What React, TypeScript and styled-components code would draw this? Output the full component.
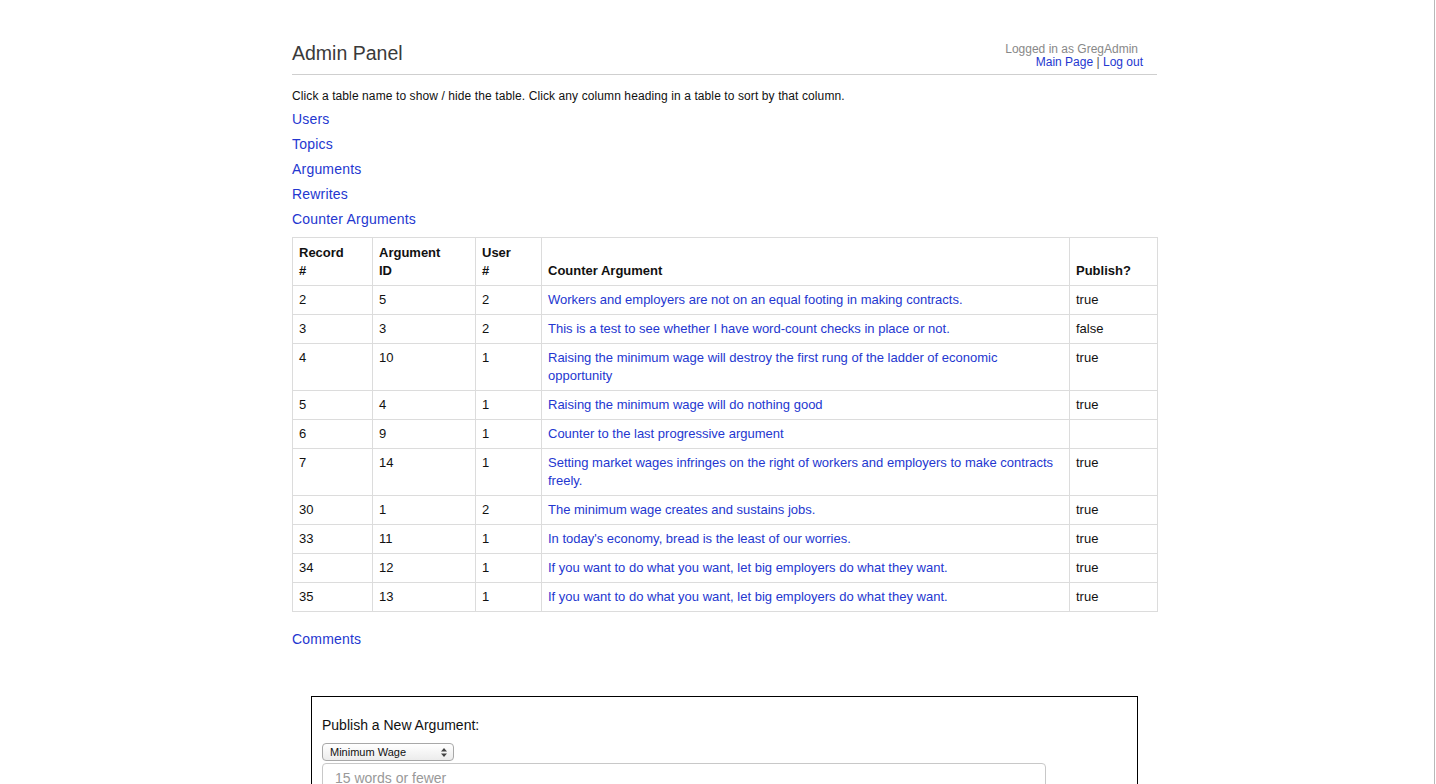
import styled, { createGlobalStyle } from "styled-components";

const GlobalStyle = createGlobalStyle`
  html, body {
    margin: 0;
    padding: 0;
    background: #fff;
  }
  body {
    font-family: "Liberation Sans", Arial, Helvetica, sans-serif;
    color: #111;
  }
`;

interface Row {
  record: number;
  argId: number;
  user: number;
  text: string;
  publish: string;
}

const rows: Row[] = [
  { record: 2, argId: 5, user: 2, text: "Workers and employers are not on an equal footing in making contracts.", publish: "true" },
  { record: 3, argId: 3, user: 2, text: "This is a test to see whether I have word-count checks in place or not.", publish: "false" },
  { record: 4, argId: 10, user: 1, text: "Raising the minimum wage will destroy the first rung of the ladder of economic opportunity", publish: "true" },
  { record: 5, argId: 4, user: 1, text: "Raising the minimum wage will do nothing good", publish: "true" },
  { record: 6, argId: 9, user: 1, text: "Counter to the last progressive argument", publish: "" },
  { record: 7, argId: 14, user: 1, text: "Setting market wages infringes on the right of workers and employers to make contracts freely.", publish: "true" },
  { record: 30, argId: 1, user: 2, text: "The minimum wage creates and sustains jobs.", publish: "true" },
  { record: 33, argId: 11, user: 1, text: "In today's economy, bread is the least of our worries.", publish: "true" },
  { record: 34, argId: 12, user: 1, text: "If you want to do what you want, let big employers do what they want.", publish: "true" },
  { record: 35, argId: 13, user: 1, text: "If you want to do what you want, let big employers do what they want.", publish: "true" },
];

const tables = ["Users", "Topics", "Arguments", "Rewrites", "Counter Arguments"];

// page frame with the thin window edge on the right
const Frame = styled.div`
  box-sizing: border-box;
  width: 1436px;
  height: 784px;
  overflow: hidden;
  position: relative;
  &::after {
    content: "";
    position: absolute;
    top: 0;
    bottom: 0;
    right: 1px;
    width: 1px;
    background: #b8b8b8;
  }
`;

const Page = styled.div`
  width: 865px;
  margin-left: 292px;
  padding-top: 40px;
`;

const Header = styled.div`
  display: flex;
  justify-content: space-between;
  align-items: flex-start;
  border-bottom: 1px solid #cfcfcf;
  padding-bottom: 5px;
`;

const Title = styled.h1`
  margin: 0;
  font-size: 19.5px;
  font-weight: normal;
  color: #3a3a3a;
  line-height: 26px;
`;

const UserBox = styled.div`
  text-align: right;
  font-size: 12px;
  line-height: 13px;
  padding-top: 3px;
  padding-right: 14px;
`;

const LoggedIn = styled.div`
  color: #888;
  padding-right: 5px;
`;

const Link = styled.a`
  color: #2437d0;
  text-decoration: none;
  cursor: pointer;
`;

const Sep = styled.span`
  color: #555;
`;

const Intro = styled.p`
  margin: 13px 0 0;
  font-size: 12px;
  line-height: 16px;
  letter-spacing: 0.1px;
`;

const TableLinks = styled.div`
  display: flex;
  flex-direction: column;
  align-items: flex-start;
  margin-top: 3px;
`;

const TableLink = styled(Link)`
  font-size: 14px;
  line-height: 25px;
  letter-spacing: 0.2px;
`;

const DataTable = styled.table`
  width: 866px;
  table-layout: fixed;
  border-collapse: collapse;
  margin-top: 5px;
  font-size: 12px;
`;

const Th = styled.th<{ $w?: number }>`
  width: ${({ $w }) => ($w ? `${$w}px` : "auto")};
  border: 1px solid #dcdcdc;
  padding: 6px 6px 5px;
  text-align: left;
  vertical-align: bottom;
  font-weight: bold;
  font-size: 13px;
  line-height: 18px;
  color: #111;
`;

const Td = styled.td`
  border: 1px solid #dcdcdc;
  padding: 5px 6px;
  vertical-align: top;
  font-size: 13px;
  line-height: 18px;
  color: #111;
`;

const Comments = styled(TableLink)`
  margin-top: 12px;
`;

const PublishBox = styled.div`
  box-sizing: border-box;
  width: 827px;
  margin: 44px 0 0 19px;
  border: 1px solid #000;
  padding: 19px 10px 0;
  height: 120px;
`;

const PublishLabel = styled.div`
  font-size: 14px;
  line-height: 18px;
  color: #111;
`;

const Select = styled.div`
  box-sizing: border-box;
  margin-top: 9px;
  width: 132px;
  height: 18px;
  border: 1px solid #a8a8a8;
  border-radius: 4px;
  background: linear-gradient(#ffffff, #ececec);
  display: flex;
  align-items: center;
  justify-content: space-between;
  padding: 0 6px 0 7px;
  font-size: 11px;
  color: #111;
`;

const TextArea = styled.div`
  box-sizing: border-box;
  margin-top: 2px;
  width: 724px;
  height: 40px;
  border: 1px solid #c8c8c8;
  border-radius: 4px;
  padding: 6px 12px;
  font-size: 14px;
  color: #999;
`;

const SelectArrows = () => (
  <svg width="6" height="9" viewBox="0 0 6 9">
    <path d="M3 0 L6 3.5 H0 Z M3 9 L0 5.5 H6 Z" fill="#444" />
  </svg>
);

export default function App() {
  return (
    <Frame>
      <GlobalStyle />
      <Page>
        <Header>
          <Title>Admin Panel</Title>
          <UserBox>
            <LoggedIn>Logged in as GregAdmin</LoggedIn>
            <div>
              <Link>Main Page</Link> <Sep>|</Sep> <Link>Log out</Link>
            </div>
          </UserBox>
        </Header>
        <Intro>
          Click a table name to show / hide the table. Click any column heading in a table to sort by that column.
        </Intro>
        <TableLinks>
          {tables.map((t) => (
            <TableLink key={t}>{t}</TableLink>
          ))}
        </TableLinks>
        <DataTable>
          <thead>
            <tr>
              <Th $w={67}>Record<br />#</Th>
              <Th $w={90}>Argument<br />ID</Th>
              <Th $w={53}>User<br />#</Th>
              <Th>Counter Argument</Th>
              <Th $w={75}>Publish?</Th>
            </tr>
          </thead>
          <tbody>
            {rows.map((r) => (
              <tr key={r.record}>
                <Td>{r.record}</Td>
                <Td>{r.argId}</Td>
                <Td>{r.user}</Td>
                <Td>
                  <Link>{r.text}</Link>
                </Td>
                <Td>{r.publish}</Td>
              </tr>
            ))}
          </tbody>
        </DataTable>
        <TableLinks>
          <Comments>Comments</Comments>
        </TableLinks>
        <PublishBox>
          <PublishLabel>Publish a New Argument:</PublishLabel>
          <Select>
            <span>Minimum Wage</span>
            <SelectArrows />
          </Select>
          <TextArea>15 words or fewer</TextArea>
        </PublishBox>
      </Page>
    </Frame>
  );
}
